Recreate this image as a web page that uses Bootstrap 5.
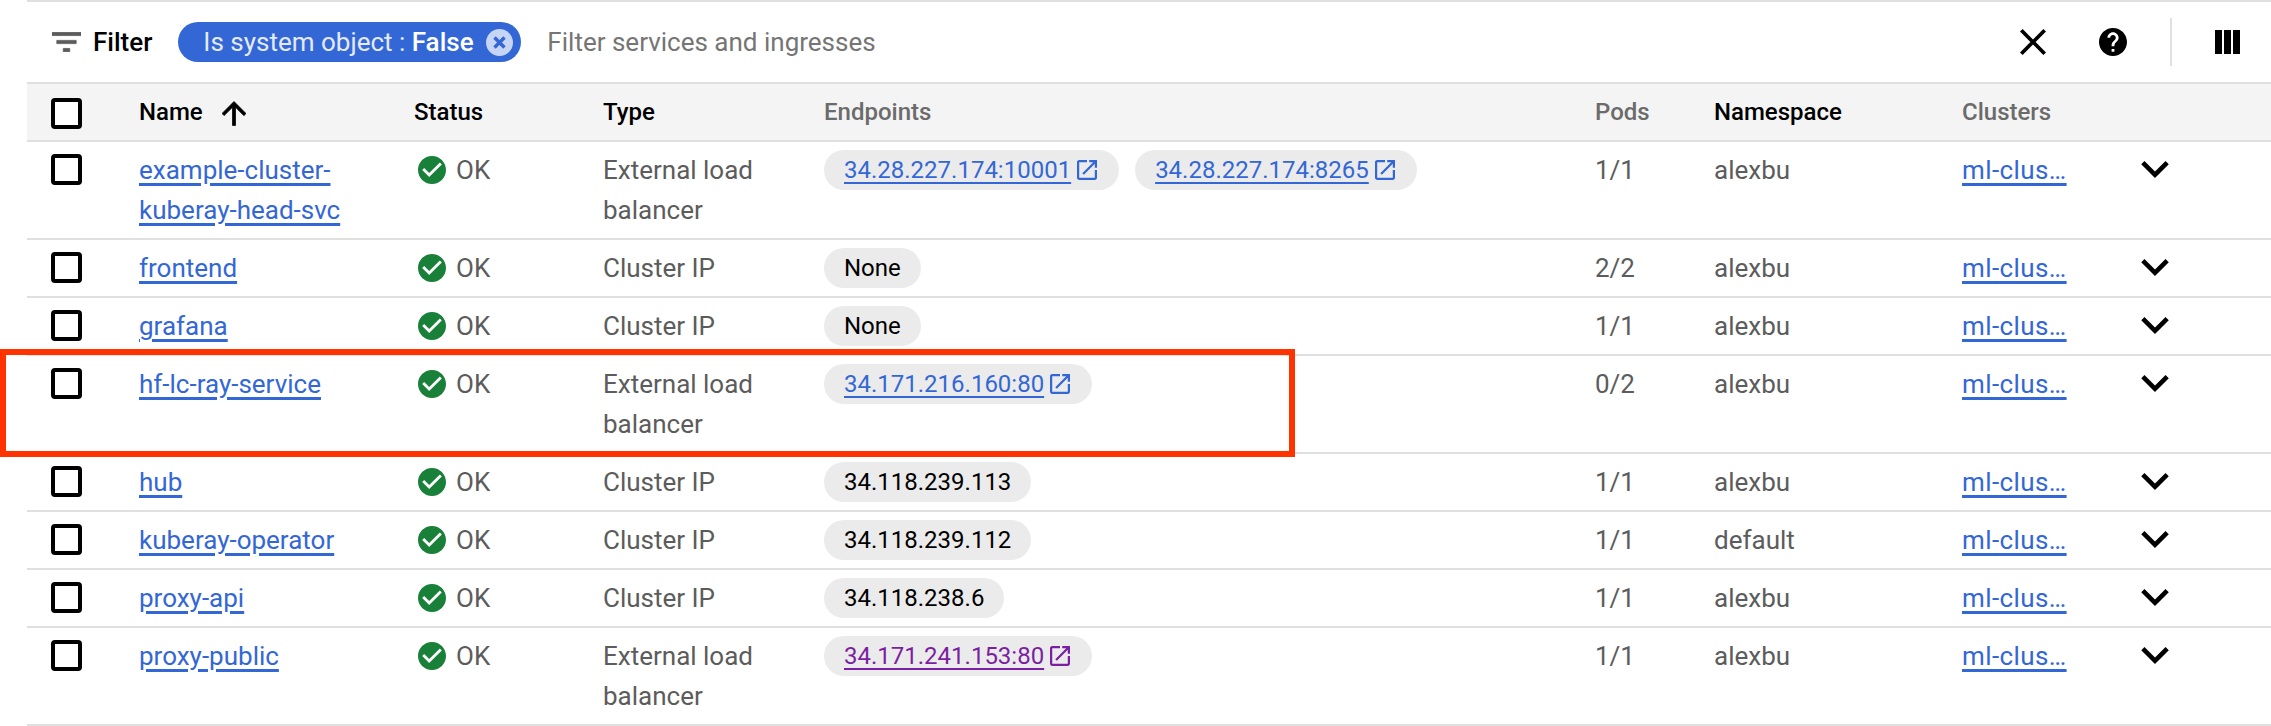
<!DOCTYPE html>
<html lang="en">
<head>
<meta charset="utf-8">
<title>Services and ingresses</title>
<link href="https://cdn.jsdelivr.net/npm/bootstrap@5.3.0/dist/css/bootstrap.min.css" rel="stylesheet">
<style>
html,body{height:726px;overflow:hidden;background:#fff}
body{font-family:Roboto,"Liberation Sans",sans-serif;font-size:26px;line-height:40px;color:#5c5c5c;position:relative}
.svc-page{padding-left:27px}
.svc-bar{height:84px;border-top:2px solid #e0e0e0;border-bottom:2px solid #e0e0e0;padding-left:25px;padding-right:31px}
.svc-filter{font-weight:500;color:#000;margin-left:12px}
.svc-icon{display:block;fill:currentColor;flex:none}
.svc-heavy{stroke:currentColor;stroke-width:.5px}
.svc-chip{height:40px;width:343px;margin-left:26px;padding-left:25px;padding-right:8px;background:#3367d6;color:#e4eafa;border-radius:20px;white-space:nowrap}
.svc-chip b{color:#fff;font-weight:500}
.svc-ph{color:#757575;margin-left:26px}
.svc-divider{width:2px;height:48px;background:#e0e0e0}
.svc-table{table-layout:fixed;width:2244px;margin:0;border-collapse:separate;border-spacing:0}
.svc-table>thead>tr>th{height:58px;padding:0 0 0 16px;background:#f4f4f4;border-bottom:2px solid #e0e0e0;font-weight:500;color:#000;vertical-align:middle;font-size:24px}
.svc-table>thead>tr>th.svc-dim{color:#6b6b6b}
.svc-table>tbody>tr>td{padding:8px 0 8px 16px;border-bottom:2px solid #e0e0e0;color:#5c5c5c;vertical-align:top;background:#fff;font-size:26px;line-height:40px}
.svc-table>thead>tr>th.svc-c0,.svc-table>tbody>tr>td.svc-c0{padding-left:24px}
.form-check-input.svc-check{display:block;width:31px;height:31px;margin:0;border:4px solid #000;border-radius:4px;background-color:#fff}
.svc-table>thead .svc-check{margin-top:2px}
.svc-table>tbody .svc-check{margin-top:4px}
.svc-arrow{margin:2px 0 0 19px}
.svc-link{color:#3367d6;text-decoration:underline;text-decoration-thickness:3px;text-underline-offset:4px}
.svc-visited{color:#7b1fa2}
.svc-ok{color:#188038;margin:6px 2px 0 4px}
.svc-pill{display:inline-flex;align-items:center;height:40px;padding:0 22px 0 20px;border-radius:20px;background:#ebebeb;color:#000;margin-right:16px;vertical-align:top;font-size:24px}
.svc-pill.svc-plain{padding-right:20px}
.svc-pill .svc-link{text-decoration-thickness:2px}
.svc-pill .svc-icon{margin-left:6px}
.svc-clus{letter-spacing:.4px}
.svc-chev{color:#000;margin:11px 0 0 0}
.svc-highlight{position:absolute;left:0;top:349px;width:1295px;height:108px;border:6px solid #ff3300;pointer-events:none}
</style>
</head>
<body>
<svg width="0" height="0" class="position-absolute">
<symbol id="i-filter" viewBox="3 6 18 12"><path d="M10 18h4v-2h-4v2zM3 6v2h18V6H3zm3 7h12v-2H6v2z"/></symbol>
<symbol id="i-up" viewBox="4 4 16 16"><path d="M4 12l1.41 1.41L11 7.83V20h2V7.83l5.58 5.59L20 12l-8-8-8 8z"/></symbol>
<symbol id="i-close" viewBox="5 5 14 14"><path d="M19 6.41L17.59 5 12 10.59 6.41 5 5 6.41 10.59 12 5 17.59 6.41 19 12 13.41 17.59 19 19 17.59 13.41 12z"/></symbol>
<symbol id="i-help" viewBox="2 2 20 20"><path d="M12 2C6.48 2 2 6.48 2 12s4.48 10 10 10 10-4.48 10-10S17.52 2 12 2zm1 17h-2v-2h2v2zm2.07-7.75l-.9.92C13.45 12.9 13 13.5 13 15h-2v-.5c0-1.1.45-2.1 1.17-2.83l1.24-1.26c.37-.36.59-.86.59-1.41 0-1.1-.9-2-2-2s-2 .9-2 2H8c0-2.21 1.79-4 4-4s4 1.79 4 4c0 .88-.36 1.68-.93 2.25z"/></symbol>
<symbol id="i-cols" viewBox="0 0 25 24"><path d="M0 0h7v24H0zM9 0h7v24H9zM18 0h7v24h-7z"/></symbol>
<symbol id="i-ok" viewBox="2 2 20 20"><path d="M12 2C6.48 2 2 6.48 2 12s4.48 10 10 10 10-4.48 10-10S17.52 2 12 2zm-2 15l-5-5 1.41-1.41L10 14.17l7.59-7.59L19 8l-9 9z"/></symbol>
<symbol id="i-ext" viewBox="3 3 18 18"><path d="M19 19H5V5h7V3H5c-1.11 0-2 .9-2 2v14c0 1.1.89 2 2 2h14c1.1 0 2-.9 2-2v-7h-2v7zM14 3v2h3.59l-9.83 9.83 1.41 1.41L19 6.41V10h2V3h-7z"/></symbol>
<symbol id="i-chev" viewBox="6 8.59 12 7.41"><path d="M16.59 8.59L12 13.17 7.41 8.59 6 10l6 6 6-6z"/></symbol>
</svg>

<div class="svc-page">
  <div class="svc-bar d-flex align-items-center">
    <svg class="svc-icon svc-heavy" width="29" height="20"><use href="#i-filter"/></svg>
    <span class="svc-filter">Filter</span>
    <span class="svc-chip d-flex align-items-center justify-content-between">
      <span>Is system object : <b>False</b></span>
      <svg class="svc-icon" width="27" height="27" viewBox="0 0 27 27"><circle cx="13.5" cy="13.5" r="13.5" fill="#c6d5f5"/><path d="M8.5 8.5l10 10M18.5 8.5l-10 10" stroke="#3367d6" stroke-width="3.4" fill="none"/></svg>
    </span>
    <span class="svc-ph">Filter services and ingresses</span>
    <svg class="svc-icon ms-auto text-black" width="26" height="26"><use href="#i-close"/></svg>
    <svg class="svc-icon text-black" style="margin-left:53px" width="28" height="28"><use href="#i-help"/></svg>
    <span class="svc-divider" style="margin-left:43px"></span>
    <svg class="svc-icon text-black" style="margin-left:43px" width="25" height="24"><use href="#i-cols"/></svg>
  </div>

  <table class="table svc-table">
    <colgroup>
      <col style="width:96px"><col style="width:275px"><col style="width:189px"><col style="width:221px"><col style="width:771px"><col style="width:119px"><col style="width:248px"><col style="width:179px"><col style="width:146px">
    </colgroup>
    <thead>
      <tr>
        <th class="svc-c0"><input class="form-check-input svc-check" type="checkbox" aria-label="Select all"></th>
        <th><span class="d-flex align-items-center">Name<svg class="svc-icon svc-arrow svc-heavy" width="24" height="27"><use href="#i-up"/></svg></span></th>
        <th>Status</th><th>Type</th><th class="svc-dim">Endpoints</th><th class="svc-dim">Pods</th><th>Namespace</th><th class="svc-dim">Clusters</th><th></th>
      </tr>
    </thead>
    <tbody>
      <tr>
        <td class="svc-c0"><input class="form-check-input svc-check" type="checkbox" aria-label="Select"></td>
        <td><a class="svc-link" href="#">example-cluster-kuberay-head-svc</a></td>
        <td><span class="d-flex gap-2"><svg class="svc-icon svc-ok" width="28" height="28"><use href="#i-ok"/></svg>OK</span></td>
        <td>External load balancer</td>
        <td><span class="svc-pill"><a class="svc-link" href="#">34.28.227.174:10001</a><svg class="svc-icon svc-link" width="20" height="20"><use href="#i-ext"/></svg></span><span class="svc-pill"><a class="svc-link" href="#">34.28.227.174:8265</a><svg class="svc-icon svc-link" width="20" height="20"><use href="#i-ext"/></svg></span></td>
        <td>1/1</td><td>alexbu</td>
        <td><a class="svc-link svc-clus" href="#">ml-clus…</a></td>
        <td><svg class="svc-icon svc-chev" width="28" height="17"><use href="#i-chev"/></svg></td>
      </tr>
      <tr>
        <td class="svc-c0"><input class="form-check-input svc-check" type="checkbox" aria-label="Select"></td>
        <td><a class="svc-link" href="#">frontend</a></td>
        <td><span class="d-flex gap-2"><svg class="svc-icon svc-ok" width="28" height="28"><use href="#i-ok"/></svg>OK</span></td>
        <td>Cluster IP</td>
        <td><span class="svc-pill svc-plain">None</span></td>
        <td>2/2</td><td>alexbu</td>
        <td><a class="svc-link svc-clus" href="#">ml-clus…</a></td>
        <td><svg class="svc-icon svc-chev" width="28" height="17"><use href="#i-chev"/></svg></td>
      </tr>
      <tr>
        <td class="svc-c0"><input class="form-check-input svc-check" type="checkbox" aria-label="Select"></td>
        <td><a class="svc-link" href="#">grafana</a></td>
        <td><span class="d-flex gap-2"><svg class="svc-icon svc-ok" width="28" height="28"><use href="#i-ok"/></svg>OK</span></td>
        <td>Cluster IP</td>
        <td><span class="svc-pill svc-plain">None</span></td>
        <td>1/1</td><td>alexbu</td>
        <td><a class="svc-link svc-clus" href="#">ml-clus…</a></td>
        <td><svg class="svc-icon svc-chev" width="28" height="17"><use href="#i-chev"/></svg></td>
      </tr>
      <tr>
        <td class="svc-c0"><input class="form-check-input svc-check" type="checkbox" aria-label="Select"></td>
        <td><a class="svc-link" href="#">hf-lc-ray-service</a></td>
        <td><span class="d-flex gap-2"><svg class="svc-icon svc-ok" width="28" height="28"><use href="#i-ok"/></svg>OK</span></td>
        <td>External load balancer</td>
        <td><span class="svc-pill"><a class="svc-link" href="#">34.171.216.160:80</a><svg class="svc-icon svc-link" width="20" height="20"><use href="#i-ext"/></svg></span></td>
        <td>0/2</td><td>alexbu</td>
        <td><a class="svc-link svc-clus" href="#">ml-clus…</a></td>
        <td><svg class="svc-icon svc-chev" width="28" height="17"><use href="#i-chev"/></svg></td>
      </tr>
      <tr>
        <td class="svc-c0"><input class="form-check-input svc-check" type="checkbox" aria-label="Select"></td>
        <td><a class="svc-link" href="#">hub</a></td>
        <td><span class="d-flex gap-2"><svg class="svc-icon svc-ok" width="28" height="28"><use href="#i-ok"/></svg>OK</span></td>
        <td>Cluster IP</td>
        <td><span class="svc-pill svc-plain">34.118.239.113</span></td>
        <td>1/1</td><td>alexbu</td>
        <td><a class="svc-link svc-clus" href="#">ml-clus…</a></td>
        <td><svg class="svc-icon svc-chev" width="28" height="17"><use href="#i-chev"/></svg></td>
      </tr>
      <tr>
        <td class="svc-c0"><input class="form-check-input svc-check" type="checkbox" aria-label="Select"></td>
        <td><a class="svc-link" href="#">kuberay-operator</a></td>
        <td><span class="d-flex gap-2"><svg class="svc-icon svc-ok" width="28" height="28"><use href="#i-ok"/></svg>OK</span></td>
        <td>Cluster IP</td>
        <td><span class="svc-pill svc-plain">34.118.239.112</span></td>
        <td>1/1</td><td>default</td>
        <td><a class="svc-link svc-clus" href="#">ml-clus…</a></td>
        <td><svg class="svc-icon svc-chev" width="28" height="17"><use href="#i-chev"/></svg></td>
      </tr>
      <tr>
        <td class="svc-c0"><input class="form-check-input svc-check" type="checkbox" aria-label="Select"></td>
        <td><a class="svc-link" href="#">proxy-api</a></td>
        <td><span class="d-flex gap-2"><svg class="svc-icon svc-ok" width="28" height="28"><use href="#i-ok"/></svg>OK</span></td>
        <td>Cluster IP</td>
        <td><span class="svc-pill svc-plain">34.118.238.6</span></td>
        <td>1/1</td><td>alexbu</td>
        <td><a class="svc-link svc-clus" href="#">ml-clus…</a></td>
        <td><svg class="svc-icon svc-chev" width="28" height="17"><use href="#i-chev"/></svg></td>
      </tr>
      <tr>
        <td class="svc-c0"><input class="form-check-input svc-check" type="checkbox" aria-label="Select"></td>
        <td><a class="svc-link" href="#">proxy-public</a></td>
        <td><span class="d-flex gap-2"><svg class="svc-icon svc-ok" width="28" height="28"><use href="#i-ok"/></svg>OK</span></td>
        <td>External load balancer</td>
        <td><span class="svc-pill"><a class="svc-link svc-visited" href="#">34.171.241.153:80</a><svg class="svc-icon svc-link svc-visited" width="20" height="20"><use href="#i-ext"/></svg></span></td>
        <td>1/1</td><td>alexbu</td>
        <td><a class="svc-link svc-clus" href="#">ml-clus…</a></td>
        <td><svg class="svc-icon svc-chev" width="28" height="17"><use href="#i-chev"/></svg></td>
      </tr>
    </tbody>
  </table>
</div>
<div class="svc-highlight"></div>
<script src="https://cdn.jsdelivr.net/npm/bootstrap@5.3.0/dist/js/bootstrap.bundle.min.js"></script>
</body>
</html>
